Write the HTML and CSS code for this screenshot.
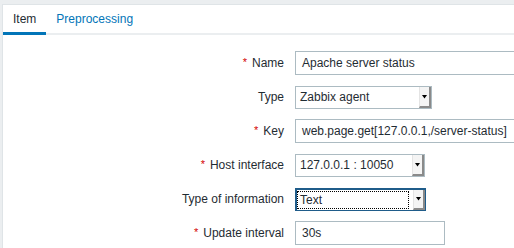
FILE: index.html
```html
<!DOCTYPE html>
<html>
<head>
<meta charset="utf-8">
<link rel="stylesheet" href="styles.css">
</head>
<body>
<div class="panel">
  <div class="tabs">
    <div class="tab active">Item</div>
    <div class="tab">Preprocessing</div>
  </div>
  <div class="form">
    <label class="lbl"><span class="req">*</span>Name</label>
    <div class="field"><div class="input wide">Apache server status</div></div>

    <label class="lbl">Type</label>
    <div class="field"><div class="select w-type"><span class="val">Zabbix agent</span><span class="btn"><svg width="5" height="4" viewBox="0 0 5 4"><polygon points="0,0 5,0 2.5,3.5" fill="#000"/></svg></span></div></div>

    <label class="lbl"><span class="req">*</span>Key</label>
    <div class="field"><div class="input wide">web.page.get[127.0.0.1,/server-status]</div></div>

    <label class="lbl"><span class="req">*</span>Host interface</label>
    <div class="field"><div class="select w-host"><span class="val">127.0.0.1 : 10050</span><span class="btn"><svg width="5" height="4" viewBox="0 0 5 4"><polygon points="0,0 5,0 2.5,3.5" fill="#000"/></svg></span></div></div>

    <label class="lbl">Type of information</label>
    <div class="field"><div class="select w-info focused"><span class="val"><span class="ring">Text</span></span><span class="btn"><svg width="5" height="4" viewBox="0 0 5 4"><polygon points="0,0 5,0 2.5,3.5" fill="#000"/></svg></span></div></div>

    <label class="lbl"><span class="req">*</span>Update interval</label>
    <div class="field"><div class="input small">30s</div></div>
  </div>
</div>
</body>
</html>
```
FILE: styles.css
```css
html, body {
  margin: 0;
  overflow: hidden;
}
body {
  background: #ebeef0;
  padding: 4px 0 0 2px;
  font-family: "Liberation Sans", Arial, sans-serif;
  font-size: 12px;
  color: #1f2c33;
  height: 244px;
}
.panel {
  background: #fff;
  border-top: 1px solid #dfe4e7;
  border-left: 1px solid #dfe4e7;
  height: 100%;
  width: 1000px;
}
.tabs {
  display: flex;
  height: 28px;
  border-bottom: 2px solid #ebeef0;
}
.tab {
  padding: 0 10px;
  line-height: 28px;
  color: #0275b8;
  height: 27px;
}
.tab.active {
  color: #1f2c33;
  border-bottom: 3px solid #0275b8;
}
.form {
  display: grid;
  grid-template-columns: 281px auto;
  grid-auto-rows: 24px;
  column-gap: 11px;
  row-gap: 10px;
  padding-top: 16px;
}
.lbl {
  display: flex;
  align-items: center;
  justify-content: flex-end;
  white-space: nowrap;
}
.req {
  color: #d40000;
  margin-right: 5px;
  font-size: 11px;
  position: relative;
  top: -1px;
}
.field {
  display: flex;
  align-items: center;
}
.input {
  box-sizing: border-box;
  height: 24px;
  border: 1px solid #acbbc2;
  padding: 0 6px;
  line-height: 22px;
  white-space: nowrap;
  background: #fff;
}
.wide { width: 453px; }
.small { width: 150px; }
.select {
  box-sizing: border-box;
  height: 23px;
  border: 1px solid #acbbc2;
  display: flex;
  background: #fff;
}
.w-type { width: 137px; }
.w-host { width: 130px; }
.w-info { width: 131px; }
.val {
  flex: 1;
  padding-left: 4px;
  line-height: 21px;
  white-space: nowrap;
}
.btn {
  box-sizing: border-box;
  width: 12px;
  background: #f4f4f4;
  border-left: 1px solid #e4e4e4;
  border-right: 2px solid #8a8a8a;
  border-bottom: 2px solid #8a8a8a;
  display: flex;
  align-items: center;
  justify-content: center;
  padding-top: 1px;
}
.focused {
  border: 2px solid #1f5c8a;
  border-right-width: 1px;
  border-bottom-width: 1px;
}
.focused .val {
  padding: 1px 4px 1px 0;
  display: flex;
}
.ring {
  flex: 1;
  border: 1px dotted #000;
  padding-left: 2px;
  line-height: 17px;
}
```
